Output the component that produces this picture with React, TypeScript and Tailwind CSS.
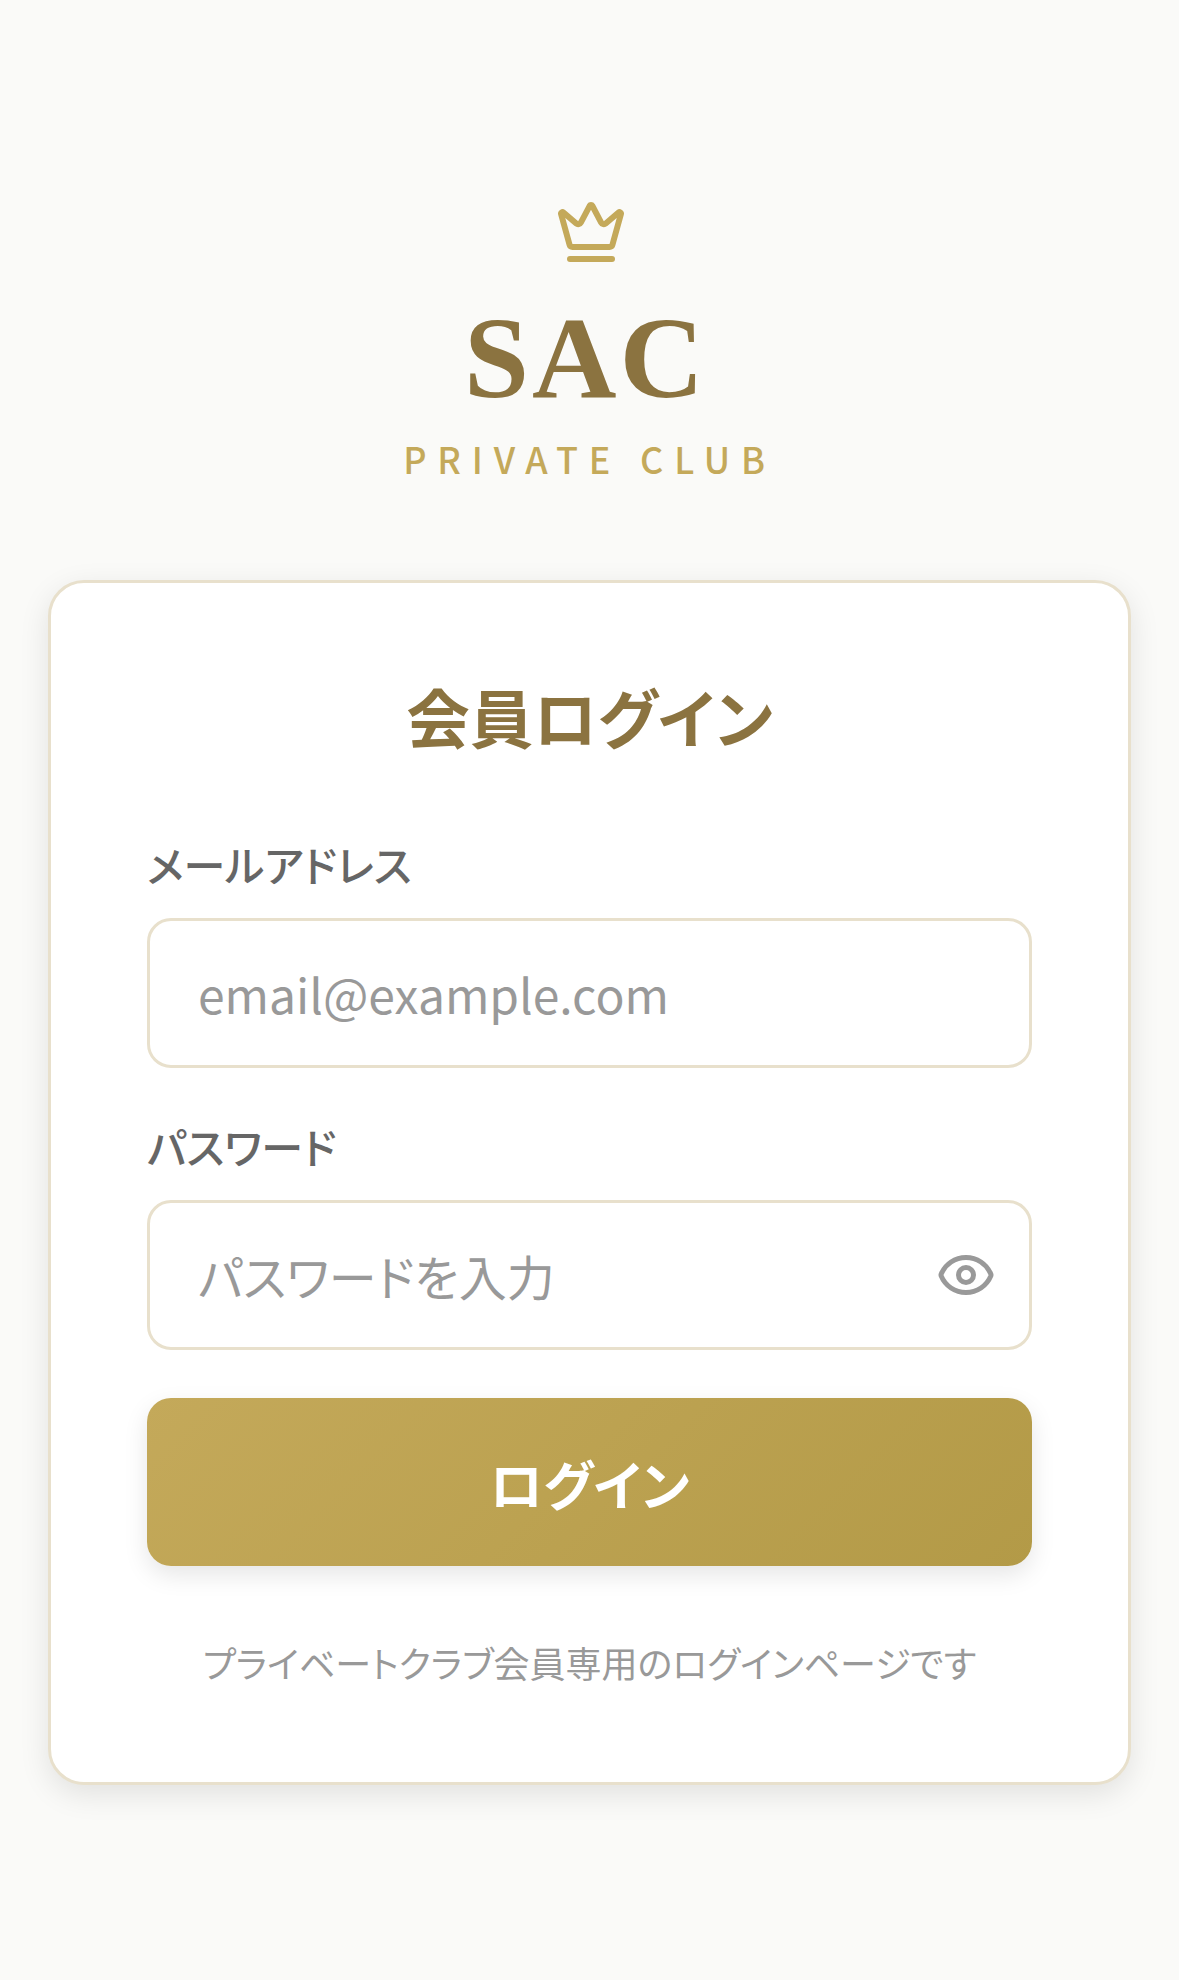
import React from 'react';
import { Crown, Eye } from 'lucide-react';

const sans = "font-['Noto_Sans_CJK_JP','Noto_Sans',sans-serif] [font-feature-settings:'palt']";

const App = () => {
  return (
    <div className={`${sans} flex min-h-[1980px] flex-col items-center bg-[#FAFAF8] px-[48px] pt-[196px]`}>
      <Crown size={72} strokeWidth={2} className="ml-[2px] text-[#C4A95A]" />
      <h1 className="mt-[31px] pr-[8px] font-['Liberation_Serif',serif] text-[117px] leading-[117px] font-bold tracking-[3px] text-[#8B7340]">
        SAC
      </h1>
      <p className="mt-[15px] text-[36px] leading-[54px] font-medium tracking-[10.8px] text-[#C4A95A]">
        PRIVATE CLUB
      </p>

      <div className="mt-[95px] w-full rounded-[36px] border-[3px] border-[#E8E0CC] bg-white px-[96px] pt-[93px] pb-[93px] shadow-[0_9px_30px_rgba(0,0,0,0.1)]">
        <h2 className="text-center text-[63.5px] leading-[78px] font-bold text-[#8B7340]">会員ログイン</h2>

        <form className="mt-[80px]">
          <label htmlFor="email" className="block text-[42px] leading-[60px] font-medium text-[#666666]">
            メールアドレス
          </label>
          <input
            id="email"
            type="email"
            placeholder="email@example.com"
            className="mt-[24px] block h-[150px] w-full rounded-[24px] border-[3px] border-[#E8E0CC] bg-white px-[48px] text-[48px] outline-none placeholder:text-[#999999]"
          />

          <label htmlFor="password" className="mt-[48px] block text-[42px] leading-[60px] font-medium text-[#666666]">
            パスワード
          </label>
          <div className="relative mt-[24px]">
            <input
              id="password"
              type="password"
              placeholder="パスワードを入力"
              className="block h-[150px] w-full rounded-[24px] border-[3px] border-[#E8E0CC] bg-white px-[48px] text-[48px] outline-none placeholder:text-[#999999]"
            />
            <button type="button" className="absolute top-[45px] right-[36px] text-[#999999]">
              <Eye size={60} strokeWidth={2} />
            </button>
          </div>

          <button
            type="submit"
            className="mt-[48px] block h-[168px] w-full rounded-[24px] bg-[linear-gradient(135deg,#C4A95A,#B39A47)] pt-[3px] text-[53px] font-bold text-white shadow-[0_9px_24px_rgba(0,0,0,0.1)]"
          >
            ログイン
          </button>
        </form>

        <p className="mt-[69px] text-center text-[36px] leading-[54px] text-[#999999]">
          プライベートクラブ会員専用のログインページです
        </p>
      </div>
    </div>
  );
};

export default App;
